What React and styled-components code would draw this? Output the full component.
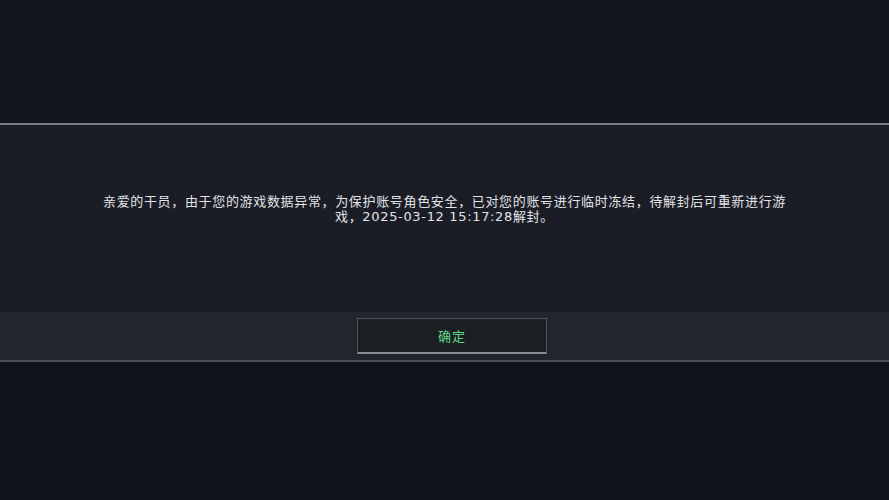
import styled, { createGlobalStyle } from 'styled-components';

const GlobalStyle = createGlobalStyle`
    html, body {
        margin: 0;
        padding: 0;
        background: #12141b;
    }
    body {
        font-family: "DejaVu Sans", "Noto Sans CJK SC", sans-serif;
    }
`;

const App = () => {
    return (
        <Screen>
            <GlobalStyle />
            <Backdrop />
            <Dialog>
                <Body>
                    <Message>
                        亲爱的干员，由于您的游戏数据异常，为保护账号角色安全，已对您的账号进行临时冻结，待解封后可重新进行游戏，2025-03-12 15:17:28解封。
                    </Message>
                </Body>
                <Footer>
                    <ConfirmButton>确定</ConfirmButton>
                </Footer>
            </Dialog>
            <Backdrop $grow />
        </Screen>
    );
};

export default App;

const Screen = styled.div`
    width: 889px;
    height: 500px;
    display: flex;
    flex-direction: column;
    overflow: hidden;
    background: #12141b;
`;

const Backdrop = styled.div`
    height: ${(p) => (p.$grow ? 'auto' : '123px')};
    flex: ${(p) => (p.$grow ? '1' : 'none')};
    background: ${(p) => (p.$grow ? '#11131b' : '#13151d')};
`;

const Dialog = styled.div`
    display: flex;
    flex-direction: column;
    border-top: 2px solid #7b7e86;
    border-bottom: 2px solid #4b4e58;
`;

const Body = styled.div`
    height: 187px;
    box-sizing: border-box;
    padding-top: 69px;
    display: flex;
    justify-content: center;
    background: #1b1d26;
`;

const Message = styled.p`
    margin: 0;
    width: 700px;
    text-align: center;
    font-size: 13px;
    line-height: 15px;
    letter-spacing: 0.66px;
    color: #e2e3e6;
`;

const Footer = styled.div`
    height: 48px;
    display: flex;
    justify-content: center;
    align-items: center;
    background: #22252e;
`;

const ConfirmButton = styled.button`
    width: 190px;
    height: 36px;
    margin-left: 15px;
    box-sizing: border-box;
    background: #1b1f22;
    border: 1px solid #4d5455;
    border-bottom: 2px solid #868b8e;
    color: #62d98c;
    font-family: "Noto Sans CJK SC", sans-serif;
    font-size: 13px;
    letter-spacing: 1px;
    cursor: pointer;
`;
